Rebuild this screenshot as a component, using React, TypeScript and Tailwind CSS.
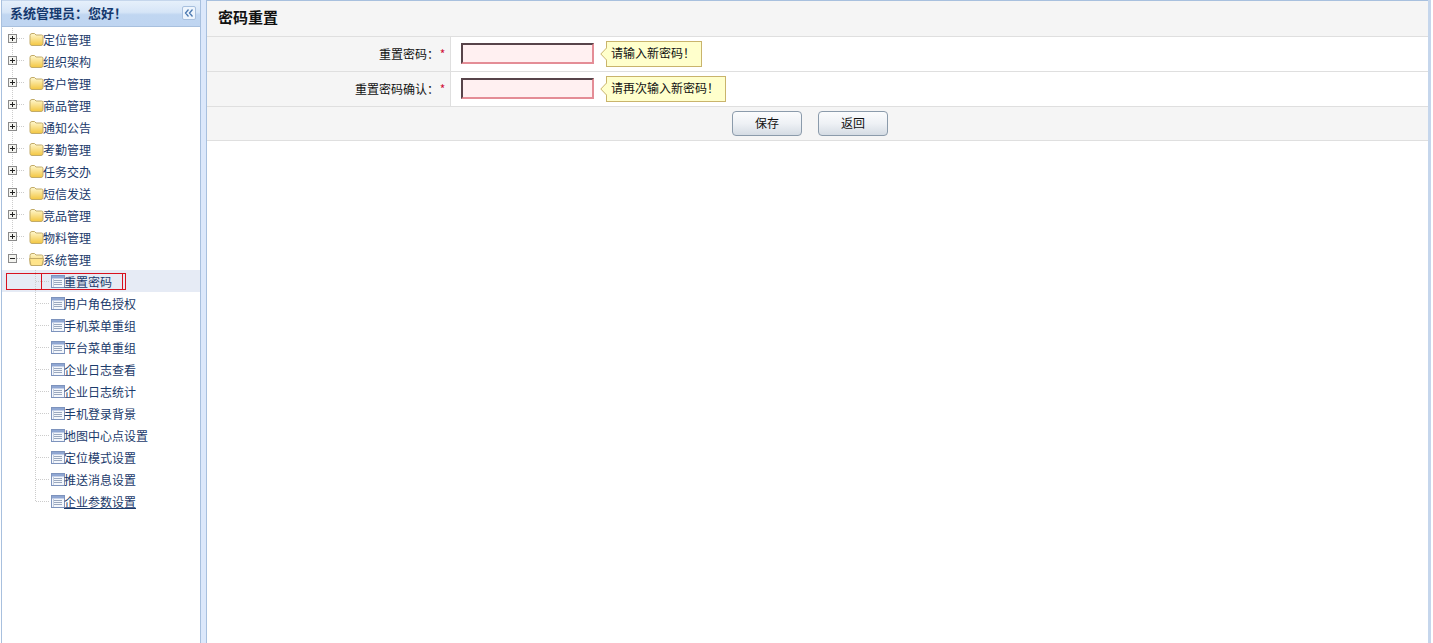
import React from "react";

const groups = ["定位管理", "组织架构", "客户管理", "商品管理", "通知公告", "考勤管理", "任务交办", "短信发送", "竞品管理", "物料管理"];
const children = ["重置密码", "用户角色授权", "手机菜单重组", "平台菜单重组", "企业日志查看", "企业日志统计", "手机登录背景", "地图中心点设置", "定位模式设置", "推送消息设置", "企业参数设置"];

const font = "font-['Noto_Sans_CJK_SC','Liberation_Sans',sans-serif]";

function Folder({ open }: { open?: boolean }) {
  return (
    <svg width="15" height="13" viewBox="0 0 15 13" className="shrink-0">
      <defs>
        <linearGradient id="fold" x1="0" y1="0" x2="0" y2="1">
          <stop offset="0" stopColor="#fff8d0" />
          <stop offset="1" stopColor="#f3c640" />
        </linearGradient>
      </defs>
      <path d="M1 2.5 Q1 0.5 3 0.5 H5.5 L7 2 H12.5 Q14 2 14 3.5 V10.5 Q14 12.5 12 12.5 H3 Q1 12.5 1 10.5 Z" fill="url(#fold)" stroke="#c2ab68" />
      {open && <path d="M0.5 5.5 H14.5 L13 12.5 H2 Z" fill="#ffe48a" stroke="#c2ab68" />}
    </svg>
  );
}

function PageIcon() {
  return (
    <svg width="14" height="13" viewBox="0 0 14 13" className="shrink-0">
      <rect x="0.5" y="0.5" width="13" height="12" fill="#f4f7fc" stroke="#7d93bd" />
      <rect x="1" y="1" width="12" height="2.5" fill="#8fa6d2" />
      <path d="M3 5.5H11M3 7.5H11M3 9.5H11" stroke="#9aa8bf" />
      <path d="M2.5 4V12" stroke="#c3cee0" />
    </svg>
  );
}

function Expander({ open, last }: { open?: boolean; last?: boolean }) {
  return (
    <svg width="27" height="22" viewBox="0 0 27 22" className="shrink-0">
      <path d={last ? "M10.5 0V6" : "M10.5 0V22"} stroke="#ccc" strokeDasharray="1 1" />
      <path d="M15 10.5H23" stroke="#ccc" strokeDasharray="1 1" />
      <rect x="6.5" y="6.5" width="8" height="8" fill="#f4f4f0" stroke="#8a8a8a" />
      <path d="M8 10.5H13" stroke="#222" />
      {!open && <path d="M10.5 8V13" stroke="#222" />}
    </svg>
  );
}

function ChildBranch({ last }: { last?: boolean }) {
  return (
    <svg width="49" height="22" viewBox="0 0 49 22" className="shrink-0">
      <path d={last ? "M33.5 0V11" : "M33.5 0V22"} stroke="#ccc" strokeDasharray="1 1" />
      <path d="M34 11.5H47" stroke="#ccc" strokeDasharray="1 1" />
    </svg>
  );
}

function FormRow({ label, tip }: { label: string; tip: string }) {
  return (
    <div className="flex h-[35px] border-b border-[#dfdfdf]">
      <div className="flex w-[244px] items-center justify-end border-r border-[#dfdfdf] bg-[#f5f5f5] pb-[1px] pr-[4px] text-[12px] text-[#111]">
        <span>{label}：</span>
        <span className="w-[7px] text-center text-[#d0103a]">*</span>
      </div>
      <div className="flex items-center pb-[1px] pl-[10px]">
        <div className="h-[21px] w-[133px] border-2 border-t-[#57444a] border-l-[#57444a] border-r-[#e48d96] border-b-[#e48d96] bg-[#fff0f1]" />
        <div className="relative ml-[12px] flex h-[26px] items-center border border-[#c9b46c] bg-[#ffffcc] pb-[2px] pl-[4px] pr-[6px] text-[12px] text-[#111]">
          <svg width="7" height="14" viewBox="0 0 7 14" className="absolute left-[-7px] top-[5px]">
            <path d="M7 0.5 L0.8 7 L7 13.5" fill="#ffffcc" stroke="#c9b46c" />
          </svg>
          {tip}
        </div>
      </div>
    </div>
  );
}

function Btn({ text }: { text: string }) {
  return (
    <button className="h-[25px] w-[70px] rounded-[4px] border border-[#8b9bab] bg-gradient-to-b from-[#fbfcfd] via-[#eef1f5] to-[#d5dce4] text-[12px] text-[#111]">
      {text}
    </button>
  );
}

export default function App() {
  return (
    <div className={`relative flex h-[643px] w-[1433px] overflow-hidden bg-white ${font}`}>
      <aside className="ml-[1px] flex w-[200px] shrink-0 flex-col border-x border-[#a8c0de]">
        <div className="flex h-[27px] shrink-0 items-center justify-between border-y border-[#a8c0de] border-t-[#c5d6ec] bg-[linear-gradient(to_bottom,#e6f0fb_0%,#d6e5f7_45%,#c0d6f1_55%,#bfd5f1_100%)] pb-[2px] pl-[8px] pr-[4px]">
          <span className="text-[13px] font-bold text-[#15396e]">系统管理员：您好！</span>
          <span className="flex h-[14px] w-[14px] items-center justify-center rounded-[2px] border border-[#a8c0de] bg-[#eef5fd]">
            <svg width="10" height="8" viewBox="0 0 10 8">
              <path d="M4.5 0.5 L1.5 4 L4.5 7.5M8.5 0.5 L5.5 4 L8.5 7.5" fill="none" stroke="#4a78b0" strokeWidth="1.3" />
            </svg>
          </span>
        </div>
        <div className="pt-[1px] text-[12px] text-[#1b3a6b]">
          {groups.map((g) => (
            <div key={g} className="flex h-[22px] items-center">
              <Expander />
              <Folder />
              <span className="-ml-[1px] pt-[2px]">{g}</span>
            </div>
          ))}
          <div className="flex h-[22px] items-center">
            <Expander open last />
            <Folder open />
            <span className="-ml-[1px] pt-[2px]">系统管理</span>
          </div>
          {children.map((c, i) => (
            <div key={c} className={`flex h-[22px] items-center ${i === 0 ? "bg-[#e6ebf5]" : ""}`}>
              <ChildBranch last={i === children.length - 1} />
              <PageIcon />
              <span className={i === children.length - 1 ? "-ml-[1px] mt-[2px] underline" : "-ml-[1px] mt-[2px]"}>{c}</span>
            </div>
          ))}
        </div>
      </aside>

      <div className="w-[6px] shrink-0 border-r border-[#a8c0de] bg-[#dce8fb]" />

      <main className="w-[1224px] shrink-0 border-r-[3px] border-[#c5d6ec]">
        <div className="flex h-[37px] items-center border-y border-[#dfdfdf] border-t-[#a8c0de] bg-[#f5f5f5] pb-[2px] pl-[11px] text-[15px] font-bold text-[#111]">
          密码重置
        </div>
        <FormRow label="重置密码" tip="请输入新密码！" />
        <FormRow label="重置密码确认" tip="请再次输入新密码！" />
        <div className="flex h-[34px] items-center justify-center gap-[16px] border-b border-[#dfdfdf] bg-[#f5f5f5] pb-[1px] pr-[15px]">
          <Btn text="保存" />
          <Btn text="返回" />
        </div>
      </main>

      {/* red annotation box drawn over the screenshot */}
      <div className="absolute left-[6px] top-[273px] h-[17px] w-[120px] border border-[#d8121f]">
        <div className="ml-[34px] h-full w-[82px] border-x border-[#d8121f]" />
      </div>
    </div>
  );
}
